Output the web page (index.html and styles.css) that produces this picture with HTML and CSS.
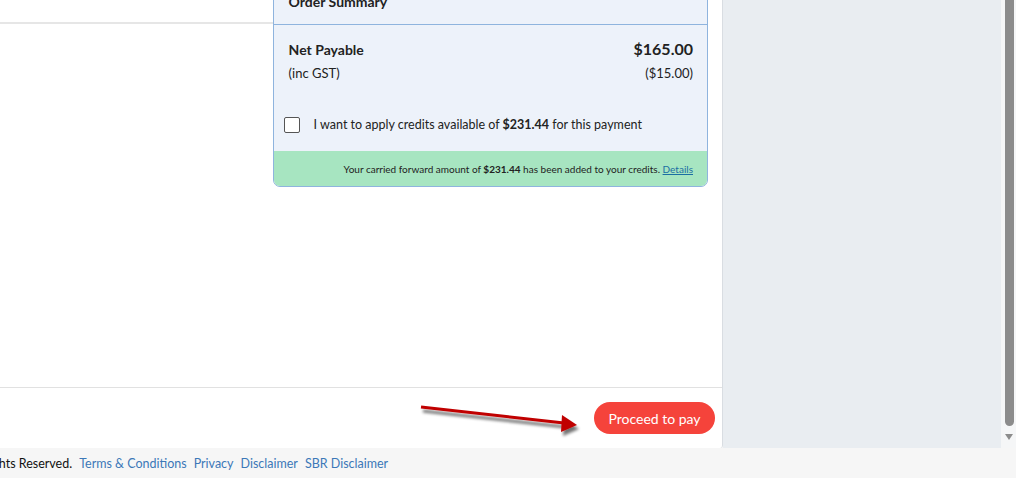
FILE: index.html
```html
<!DOCTYPE html>
<html>
<head>
<meta charset="utf-8">
<link rel="stylesheet" href="styles.css">
</head>
<body>
<div class="app">
  <div class="top">
    <div class="panel">
      <div class="panel-body">
        <div class="left-col">
          <div class="left-head"></div>
        </div>
        <div class="card">
          <div class="card-head">Order Summary</div>
          <div class="card-body">
            <div class="row row-net">
              <span class="label-b">Net Payable</span>
              <span class="amount-b">$165.00</span>
            </div>
            <div class="row row-gst">
              <span>(inc GST)</span>
              <span>($15.00)</span>
            </div>
            <label class="credit">
              <span class="checkbox"></span>
              <span>I want to apply credits available of <b>$231.44</b> for this payment</span>
            </label>
          </div>
          <div class="card-note">Your carried forward amount of <b>$231.44</b> has been added to your credits. <a href="#">Details</a></div>
        </div>
      </div>
      <div class="panel-foot">
        <svg class="arrow" width="170" height="44" viewBox="0 0 170 44">
          <defs>
            <filter id="sh" x="-10%" y="-50%" width="130%" height="220%">
              <feGaussianBlur in="SourceAlpha" stdDeviation="1.6"/>
              <feOffset dx="2" dy="4" result="b"/>
              <feComponentTransfer><feFuncA type="linear" slope="0.55"/></feComponentTransfer>
              <feMerge><feMergeNode/><feMergeNode in="SourceGraphic"/></feMerge>
            </filter>
          </defs>
          <g filter="url(#sh)">
            <line x1="3" y1="6" x2="146" y2="22" stroke="#c00000" stroke-width="3"/>
            <polygon points="144,14 159,24 143,31" fill="#c00000"/>
          </g>
        </svg>
        <button class="pay">Proceed to pay</button>
      </div>
    </div>
    <div class="side"></div>
    <div class="scroll">
      <div class="thumb"></div>
      <div class="down"></div>
    </div>
  </div>
  <div class="footer">
    <span class="copy">All Rights Reserved.</span>
    <a href="#">Terms &amp; Conditions</a>
    <a href="#">Privacy</a>
    <a href="#">Disclaimer</a>
    <a href="#">SBR Disclaimer</a>
  </div>
</div>
</body>
</html>
```
FILE: styles.css
```css
* { box-sizing: border-box; }
html, body { margin: 0; padding: 0; }
body {
  font-family: Lato, "Open Sans", sans-serif;
  color: #222;
  width: 1016px;
  height: 478px;
  overflow: hidden;
  background: #f6f6f6;
}
.app { display: flex; flex-direction: column; height: 478px; }
.top { display: flex; height: 448px; }
.panel {
  width: 723px;
  background: #fff;
  border-right: 1px solid #d9dde2;
  border-bottom-right-radius: 3px;
  display: flex;
  flex-direction: column;
  overflow: hidden;
}
.panel-body {
  flex: 1;
  display: flex;
  align-items: flex-start;
  padding-right: 14px;
  margin-top: -22px;
  border-bottom: 1px solid #e1e1e1;
}
.left-col { width: 273px; }
.left-head { height: 46px; border-bottom: 2px solid #e6e6e6; }
.card {
  width: 436px;
  background: #edf2fa;
  border: 1px solid #8fb4de;
  border-radius: 0 0 7px 7px;
  overflow: hidden;
}
.card-head {
  height: 46px;
  padding: 14px 15px 0;
  font-weight: 700;
  font-size: 14px;
  border-bottom: 1px solid #8fb4de;
}
.card-body { padding: 14px 14px 0 15px; }
.row { display: flex; justify-content: space-between; align-items: baseline; }
.row-net { height: 22px; }
.label-b { font-weight: 700; font-size: 14px; }
.amount-b { font-weight: 700; font-size: 16px; }
.row-gst { font-size: 13px; margin-top: 4px; height: 20px; }
.credit {
  display: flex;
  gap: 14px;
  font-size: 12.5px;
  margin: 32px 0 0 -5px;
  height: 34px;
  align-items: flex-start;
}
.credit b { font-weight: 700; }
.checkbox {
  width: 16px;
  height: 16px;
  border: 1px solid #555;
  border-radius: 2px;
  background: #fff;
  flex: none;
}
.card-note {
  background: #a7e5c1;
  height: 35px;
  display: flex;
  align-items: center;
  justify-content: flex-end;
  padding: 0 14px;
  font-size: 10px;
  white-space: pre;
}
.card-note b { font-weight: 700; }
.card-note a { color: #1b6ea3; text-decoration: underline; }
.panel-foot {
  height: 60px;
  display: flex;
  align-items: center;
  justify-content: flex-end;
  padding-right: 7px;
}
.arrow { align-self: flex-start; margin-top: 13px; margin-right: 6px; }
.pay {
  height: 32px;
  width: 121px;
  border: none;
  border-radius: 16px;
  background: #f5433b;
  color: #fff;
  font-family: inherit;
  font-size: 14px;
  padding: 0;
}
.side { flex: 1; background: #e9edf1; }
.scroll {
  width: 15px;
  background: #f5f6f7;
  display: flex;
  flex-direction: column;
  align-items: center;
  padding: 0 0 0 1px;
}
.thumb {
  width: 9px;
  height: 426px;
  background: #8c8c8c;
  border-radius: 0 0 5px 5px;
}
.down {
  margin-top: 8px;
  width: 0;
  height: 0;
  border-left: 4.5px solid transparent;
  border-right: 4.5px solid transparent;
  border-top: 6px solid #8c8c8c;
}
.footer {
  height: 30px;
  display: flex;
  align-items: center;
  gap: 7px;
  font-size: 12.5px;
  background: #f6f6f6;
  white-space: nowrap;
}
.copy { margin-left: -36px; color: #111; }
.footer a { color: #3c78b8; text-decoration: none; }
```
